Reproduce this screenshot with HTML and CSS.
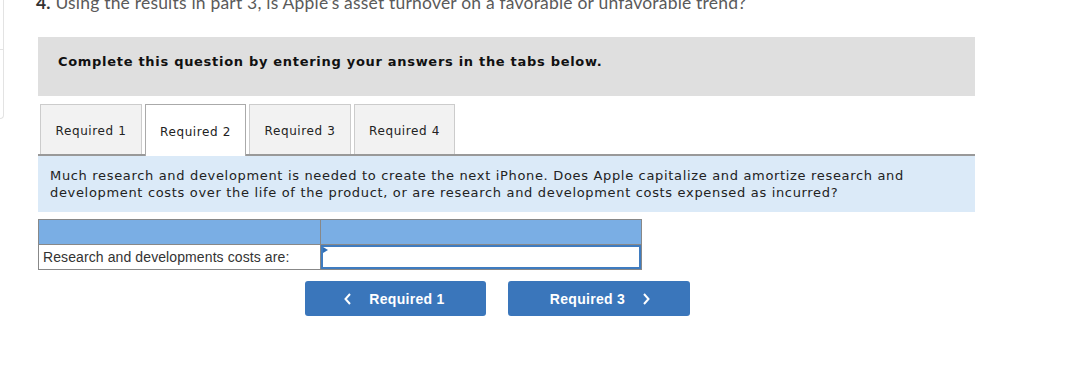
FILE: index.html
```html
<!DOCTYPE html>
<html lang="en">
<head>
    <meta charset="UTF-8">
    <meta name="viewport" content="width=device-width, initial-scale=1.0">
    <title>Required 2</title>
    <link rel="stylesheet" href="styles.css">
</head>
<body>

    <div class="page">
        <!-- borde del panel lateral -->
        <div class="side-edge">
            <div class="side-edge-top"></div>
        </div>

        <div class="content">
            <p class="question"><strong>4.</strong> Using the results in part 3, is Apple's asset turnover on a favorable or unfavorable trend?</p>

            <div class="instructions">
                Complete this question by entering your answers in the tabs below.
            </div>

            <div class="tabs">
                <div class="tab">Required 1</div>
                <div class="tab active">Required 2</div>
                <div class="tab">Required 3</div>
                <div class="tab">Required 4</div>
            </div>

            <div class="prompt">
                Much research and development is needed to create the next iPhone. Does Apple capitalize and amortize research and<br>
                development costs over the life of the product, or are research and development costs expensed as incurred?
            </div>

            <table class="answer-table">
                <tr class="head-row">
                    <td></td>
                    <td></td>
                </tr>
                <tr>
                    <td class="label-cell">Research and developments costs are:</td>
                    <td class="input-cell"><div class="select-box"><span class="marker"></span></div></td>
                </tr>
            </table>

            <div class="nav-buttons">
                <button class="nav-btn prev">
                    <svg class="chev" width="7" height="12" viewBox="0 0 7 12"><path d="M6 1 L1.5 6 L6 11" fill="none" stroke="#fff" stroke-width="2"/></svg>
                    Required 1
                </button>
                <button class="nav-btn next">
                    Required 3
                    <svg class="chev" width="7" height="12" viewBox="0 0 7 12"><path d="M1 1 L5.5 6 L1 11" fill="none" stroke="#fff" stroke-width="2"/></svg>
                </button>
            </div>
        </div>
    </div>

</body>
</html>
```

FILE: styles.css
```css
:root {
    --gray-box: #dfdfdf;
    --tab-bg: #f2f2f2;
    --tab-border: #cccccc;
    --info-bg: #dbeaf8;
    --head-blue: #7aaee4;
    --btn-blue: #3a76bb;
}

* {
    box-sizing: border-box;
    margin: 0;
    padding: 0;
}

body {
    background: #fff;
    font-family: "DejaVu Sans", Verdana, sans-serif;
    color: #222;
    overflow: hidden;
}

.page {
    display: flex;
    align-items: flex-start;
}

.side-edge {
    width: 4px;
    height: 119px;
    border-right: 1px solid #e3e3e3;
    border-bottom: 1px solid #e3e3e3;
    border-bottom-right-radius: 4px;
    flex-shrink: 0;
}

.side-edge-top {
    height: 50px;
    border-bottom: 1px solid #e3e3e3;
}

.content {
    margin-left: 34px;
    width: 937px;
}

.question {
    font-family: Lato, "Open Sans", sans-serif;
    font-size: 17.5px;
    line-height: 20px;
    height: 20px;
    color: #5a5a5a;
    letter-spacing: 0.2px;
    margin: -7px 0 0 -2px;
    white-space: nowrap;
}

.question strong {
    color: #333;
}

.instructions {
    margin-top: 24px;
    height: 59px;
    background: var(--gray-box);
    padding: 17px 20px 0;
    font-weight: bold;
    font-size: 13px;
    letter-spacing: 0.7px;
    color: #111;
}

.tabs {
    display: flex;
    gap: 3px;
    margin-top: 8px;
    padding-left: 2px;
    border-bottom: 2px solid #999;
    height: 52px;
}

.tab {
    width: 102px;
    height: 50px;
    background: var(--tab-bg);
    border: 1px solid var(--tab-border);
    border-bottom: none;
    font-size: 12px;
    letter-spacing: 0.6px;
    color: #222;
    display: flex;
    align-items: center;
    justify-content: center;
    padding-top: 2px;
}

.tab:nth-child(2),
.tab:nth-child(4) {
    width: 101px;
}

.tab.active {
    background: #fff;
    border-color: #aaa;
    height: 52px;
    position: relative;
    z-index: 1;
}

.prompt {
    background: var(--info-bg);
    padding: 11px 12px;
    font-size: 13px;
    line-height: 17px;
    letter-spacing: 0.67px;
    color: #222;
    height: 56px;
    white-space: nowrap;
}

.answer-table {
    margin-top: 7px;
    border-collapse: collapse;
    width: 604px;
    font-family: "Liberation Sans", Arial, sans-serif;
}

.answer-table td {
    border: 1px solid #888;
    padding: 0;
}

.answer-table td:first-child {
    width: 282px;
}

.head-row td {
    background: var(--head-blue);
    height: 25px;
}

.label-cell {
    height: 25px;
    font-size: 14px;
    color: #333;
    padding-left: 4px !important;
    letter-spacing: 0.1px;
}

.input-cell {
    height: 25px;
}

.select-box {
    position: relative;
    height: 24px;
    border: 2px solid #3f7cc0;
    background: #fff;
}

.marker {
    position: absolute;
    top: 0;
    left: 0;
    width: 0;
    height: 0;
    border-top: 3px solid transparent;
    border-bottom: 3px solid transparent;
    border-left: 5px solid #2f6fb8;
}

.nav-buttons {
    display: flex;
    gap: 22px;
    margin-top: 11px;
    padding-left: 267px;
}

.nav-btn {
    width: 181px;
    height: 35px;
    background: var(--btn-blue);
    color: #fff;
    border: none;
    border-radius: 3px;
    font-family: "Liberation Sans", Arial, sans-serif;
    font-weight: bold;
    font-size: 14px;
    letter-spacing: 0.3px;
    display: flex;
    align-items: center;
    justify-content: center;
    gap: 18px;
}

.nav-btn.prev {
    padding-right: 2px;
}

.nav-btn.next {
    width: 182px;
    padding-left: 2px;
}
```
